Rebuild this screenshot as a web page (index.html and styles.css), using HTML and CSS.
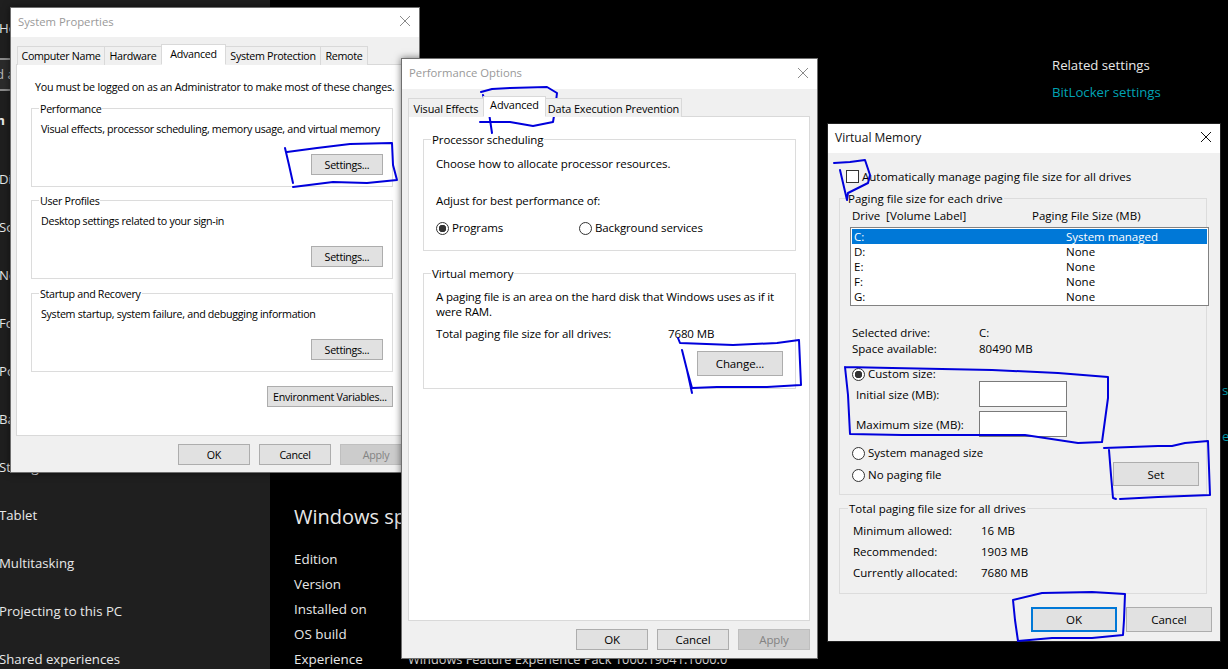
FILE: index.html
```html
<!DOCTYPE html>
<html lang="en">
<head>
<meta charset="utf-8">
<title>Virtual Memory settings</title>
<link rel="stylesheet" href="styles.css">
</head>
<body>
<div class="desktop">
  <nav class="sidebar">
    <div class="nav-home">Ho</div>
    <div class="nav-search">d a</div>
    <div class="nav-heading">m</div>
    <div class="nav-item">Di</div>
    <div class="nav-item">So</div>
    <div class="nav-item">No</div>
    <div class="nav-item">Fo</div>
    <div class="nav-item">Po</div>
    <div class="nav-item">Ba</div>
    <div class="nav-item">Storage</div>
    <div class="nav-item">Tablet</div>
    <div class="nav-item">Multitasking</div>
    <div class="nav-item">Projecting to this PC</div>
    <div class="nav-item">Shared experiences</div>
  </nav>
  <main class="settings">
    <div class="spec">
      <h2 class="spec-title">Windows specifications</h2>
      <div class="spec-row">Edition</div>
      <div class="spec-row">Version</div>
      <div class="spec-row">Installed on</div>
      <div class="spec-row">OS build</div>
      <div class="spec-row spec-exp"><span class="spec-key">Experience</span><span class="spec-value">Windows Feature Experience Pack 1000.19041.1000.0</span></div>
    </div>
    <aside class="related">
      <div class="related-title">Related settings</div>
      <div class="related-link">BitLocker settings</div>
      <div class="edge-link edge-a">s</div>
      <div class="edge-link edge-b">e</div>
    </aside>
  </main>

  <section class="window win-sys">
    <header class="titlebar inactive"><span>System Properties</span>
      <svg class="close" viewBox="0 0 12 12"><path d="M1 1L11 11M11 1L1 11"/></svg></header>
    <div class="tabs tabs-sys">
      <div class="tab t-name">Computer Name</div>
      <div class="tab t-hw">Hardware</div>
      <div class="tab active t-adv">Advanced</div>
      <div class="tab t-prot">System Protection</div>
      <div class="tab t-rem">Remote</div>
    </div>
    <div class="panel panel-sys">
      <p class="admin-note">You must be logged on as an Administrator to make most of these changes.</p>
      <div class="group sys-group">
        <div class="legend">Performance</div>
        <p class="group-desc">Visual effects, processor scheduling, memory usage, and virtual memory</p>
        <button class="btn btn-settings">Settings...</button>
      </div>
      <div class="group sys-group">
        <div class="legend">User Profiles</div>
        <p class="group-desc">Desktop settings related to your sign-in</p>
        <button class="btn btn-settings">Settings...</button>
      </div>
      <div class="group sys-group">
        <div class="legend">Startup and Recovery</div>
        <p class="group-desc">System startup, system failure, and debugging information</p>
        <button class="btn btn-settings">Settings...</button>
      </div>
      <button class="btn btn-env">Environment Variables...</button>
    </div>
    <footer class="footer footer-sys">
      <button class="btn">OK</button><button class="btn">Cancel</button><button class="btn disabled">Apply</button>
    </footer>
  </section>

  <section class="window win-perf">
    <header class="titlebar inactive tall"><span>Performance Options</span>
      <svg class="close" viewBox="0 0 12 12"><path d="M1 1L11 11M11 1L1 11"/></svg></header>
    <div class="tabs tabs-perf">
      <div class="tab t-vis">Visual Effects</div>
      <div class="tab active t-adv2">Advanced</div>
      <div class="tab t-dep">Data Execution Prevention</div>
    </div>
    <div class="panel panel-perf">
      <div class="group proc-group">
        <div class="legend">Processor scheduling</div>
        <p class="proc-line">Choose how to allocate processor resources.</p>
        <p class="proc-line adjust">Adjust for best performance of:</p>
        <div class="radio-row">
          <label class="radio-label prog"><span class="radio on"></span>Programs</label>
          <label class="radio-label"><span class="radio"></span>Background services</label>
        </div>
      </div>
      <div class="group vm-group">
        <div class="legend">Virtual memory</div>
        <p class="vm-text">A paging file is an area on the hard disk that Windows uses as if it were RAM.</p>
        <div class="vm-total"><span class="vm-total-label">Total paging file size for all drives:</span><span>7680 MB</span></div>
        <button class="btn btn-change">Change...</button>
      </div>
    </div>
    <footer class="footer footer-perf">
      <button class="btn">OK</button><button class="btn">Cancel</button><button class="btn disabled">Apply</button>
    </footer>
  </section>

  <section class="window win-vm">
    <header class="titlebar"><span>Virtual Memory</span>
      <svg class="close dark" viewBox="0 0 12 12"><path d="M1 1L11 11M11 1L1 11"/></svg></header>
    <div class="vm-body">
      <label class="auto-row"><span class="checkbox"></span>Automatically manage paging file size for all drives</label>
      <div class="group page-group">
        <div class="legend">Paging file size for each drive</div>
        <div class="list-head"><span class="col-drive">Drive&nbsp; [Volume Label]</span><span>Paging File Size (MB)</span></div>
        <div class="listbox">
          <div class="list-row selected"><span class="col-letter">C:</span><span>System managed</span></div>
          <div class="list-row"><span class="col-letter">D:</span><span>None</span></div>
          <div class="list-row"><span class="col-letter">E:</span><span>None</span></div>
          <div class="list-row"><span class="col-letter">F:</span><span>None</span></div>
          <div class="list-row"><span class="col-letter">G:</span><span>None</span></div>
        </div>
        <dl class="drive-info">
          <dt>Selected drive:</dt><dd>C:</dd>
          <dt>Space available:</dt><dd>80490 MB</dd>
        </dl>
        <label class="radio-label custom"><span class="radio on"></span>Custom size:</label>
        <div class="size-row first"><span class="size-label">Initial size (MB):</span><span class="text-input"></span></div>
        <div class="size-row"><span class="size-label">Maximum size (MB):</span><span class="text-input"></span></div>
        <div class="managed">
          <div class="managed-radios">
            <label class="radio-label"><span class="radio"></span>System managed size</label>
            <label class="radio-label"><span class="radio"></span>No paging file</label>
          </div>
          <button class="btn btn-set">Set</button>
        </div>
      </div>
      <div class="group total-group">
        <div class="legend">Total paging file size for all drives</div>
        <dl class="totals">
          <dt>Minimum allowed:</dt><dd>16 MB</dd>
          <dt>Recommended:</dt><dd>1903 MB</dd>
          <dt>Currently allocated:</dt><dd>7680 MB</dd>
        </dl>
      </div>
      <footer class="footer footer-vm">
        <button class="btn btn-wide btn-default">OK</button><button class="btn btn-wide">Cancel</button>
      </footer>
    </div>
  </section>

  <svg class="ink" viewBox="0 0 1228 669" aria-hidden="true">
    <path d="M285 148L289 165L293 183M287 152L317 148L350 144L392 143L393 165L397 180L367 183L333 182L293 187"/>
    <path d="M481 92L492 89L510 88L547 87L557 93L555 110L553 122L533 126L510 122L480 122M483 95L489 113L492 133"/>
    <path d="M678 338L680 343L733 345L777 343L799 340L801 385L767 387L717 387L692 388L687 370L682 350M687 370L692 393"/>
    <path d="M834 163L850 162L865 160L870 175L868 183L848 193L847 200L840 170"/>
    <path d="M845 367L892 368L992 370L1058 373L1108 377L1108 398L1102 442L1078 443L1025 435L958 435L902 435L850 434L848 395L845 367"/>
    <path d="M1104 448L1158 446L1172 446L1185 443L1208 441L1210 495L1158 497L1120 499M1109 450L1111 475L1113 498L1116 499"/>
    <path d="M1013 600L1042 593L1092 592L1125 594L1124 620L1123 635L1092 638L1052 638L1018 641L1015 620L1013 600"/>
  </svg>
</div>
</body>
</html>
```
FILE: styles.css
```css
* { box-sizing: border-box; }
html, body { margin: 0; padding: 0; height: 100%; overflow: hidden; background: #000; }
p, h2, dl, dd { margin: 0; }

.desktop {
  position: relative;
  width: 1228px;
  height: 669px;
  overflow: hidden;
  display: flex;
  font-family: "Open Sans", "Noto Sans", sans-serif;
  font-size: 11.5px;
  color: #000;
}

/* settings app behind the dialogs */
.sidebar {
  flex: 0 0 270px;
  height: 669px;
  background: #1f1f1f;
  color: #e8e8e8;
  font-size: 13.2px;
  overflow: hidden;
  display: flex;
  flex-direction: column;
}
.nav-home, .nav-item { flex: 0 0 48px; line-height: 48px; margin-left: -1px; white-space: nowrap; }
.nav-home { margin-top: 4px; }
.nav-search {
  flex: 0 0 31px;
  margin-top: 6px;
  line-height: 29px;
  border-top: 2px solid #8a8a8a;
  border-bottom: 2px solid #8a8a8a;
  background: #2b2b2b;
  text-indent: -4px;
  color: #b8b8b8;
}
.nav-heading { flex: 0 0 21px; margin: 19px 0 24px; line-height: 21px; font-weight: 700; text-indent: -8px; }

.settings { flex: 1; display: flex; min-width: 0; color: #e8e8e8; }
.spec { flex: 0 0 782px; padding: 503px 0 0 24px; font-size: 13.4px; }
.spec-title { font-size: 20px; font-weight: 400; line-height: 28px; margin-bottom: 16px; white-space: nowrap; }
.spec-row { height: 25px; line-height: 25px; }
.spec-exp { display: flex; white-space: nowrap; }
.spec-key { width: 114px; }
.spec-value { font-size: 12.8px; }

.related { flex: 1; display: flex; flex-direction: column; padding-top: 55px; font-size: 13.2px; }
.related-title { line-height: 20px; margin-bottom: 7px; }
.related-link { line-height: 20px; color: #00a3b4; }
.edge-link { line-height: 20px; color: #00a3b4; margin-left: 170px; }
.edge-a { margin-top: 278px; }
.edge-b { margin-top: 26px; }

/* dialogs */
.window {
  position: absolute;
  background: #f0f0f0;
  border: 1px solid #6f6f6f;
  box-shadow: 0 0 7px rgba(0, 0, 0, .55);
  display: flex;
  flex-direction: column;
}
.win-sys { left: 10px; top: 7px; width: 410px; height: 466px; font-size: 10.7px; letter-spacing: -.3px; }
.win-perf { left: 401px; top: 58px; width: 417px; height: 601px; letter-spacing: -.12px; }
.win-vm { left: 827px; top: 123px; width: 394px; height: 519px; border-color: #222; }

.titlebar {
  flex: 0 0 29px;
  background: #fff;
  display: flex;
  align-items: center;
  justify-content: space-between;
  padding: 0 8px 3px 7px;
  font-size: 12px;
  color: #111;
  letter-spacing: 0;
}
.titlebar.inactive { color: #999; font-size: 11.3px; }
.titlebar.tall { flex-basis: 30px; }
.close { width: 12px; height: 12px; fill: none; stroke: #8a8a8a; stroke-width: 1; }
.close.dark { stroke: #111; }

.tabs { display: flex; align-items: flex-end; height: 28px; margin-bottom: -1px; position: relative; z-index: 1; }
.tabs-sys { padding-left: 7px; }
.tabs-perf { padding-left: 7px; font-size: 10.9px; }
.tab {
  height: 19px;
  line-height: 19px;
  text-align: center;
  white-space: nowrap;
  background: #f0f0f0;
  border: 1px solid #d9d9d9;
  border-bottom: 0;
  margin-left: -1px;
}
.tab.active {
  height: 21px;
  line-height: 18px;
  background: #fff;
  border-bottom: 1px solid #fff;
  position: relative;
  z-index: 1;
}
.tabs-perf .tab.active { line-height: 16px; }
.t-name { width: 88px; }
.t-hw { width: 58px; }
.t-adv { width: 65px; }
.t-prot { width: 96px; }
.t-rem { width: 48px; }
.t-vis { width: 76px; }
.t-adv2 { width: 63px; }
.t-dep { width: 137px; }

.panel { background: #fff; border: 1px solid #d9d9d9; display: flex; flex-direction: column; }
.panel-sys { width: 397px; height: 372px; margin-left: 5px; padding: 14px 19px 0 14px; }
.panel-perf { width: 402px; height: 505px; margin-left: 6px; padding: 22px 13px 0 14px; }
.admin-note { line-height: 16px; white-space: nowrap; margin: 0 0 13px 4px; letter-spacing: -.23px; }

.group { border: 1px solid #dcdcdc; display: flex; flex-direction: column; }
.legend {
  width: fit-content;
  margin: -8px 0 0 8px;
  padding: 0 1px;
  background: #fff;
  line-height: 16px;
  white-space: nowrap;
}
.sys-group { height: 79px; margin-bottom: 13px; padding: 0 9px 11px 9px; }
.sys-group + .sys-group + .sys-group { margin-top: 1px; }
.sys-group .legend { margin-left: -2px; }
.group-desc { line-height: 16px; margin-top: 4px; white-space: nowrap; }
.sys-group .btn-settings { margin-top: auto; align-self: flex-end; }
.sys-group + .btn-env { margin-top: 1px; }

.btn {
  display: block;
  width: 72px;
  height: 21px;
  padding: 0;
  background: #e1e1e1;
  border: 1px solid #adadad;
  border-radius: 0;
  font: inherit;
  letter-spacing: inherit;
  color: #000;
  text-align: center;
}
.btn.disabled { background: #cccccc; border-color: #bfbfbf; color: #838383; }
.btn-env { width: 126px; align-self: flex-end; white-space: nowrap; }
.btn-change { width: 86px; height: 25px; align-self: flex-end; margin: 9px 0 0; }
.btn-set { width: 86px; height: 24px; margin: 17px 0 0; }
.btn-wide { width: 86px; height: 25px; }
.btn-default { border: 2px solid #0078d7; }

.footer { display: flex; justify-content: flex-end; gap: 9px; }
.footer-sys { margin-top: 8px; padding-right: 7px; }
.footer-perf { margin-top: 8px; padding-right: 7px; }

/* performance options */
.panel-perf .group { padding: 0 12px; }
.panel-perf .legend { margin-left: -5px; }
.proc-group { height: 112px; margin-bottom: 22px; }
.proc-line { line-height: 16px; margin-top: 8px; }
.proc-line.adjust { margin-top: 21px; }
.radio-row { display: flex; margin-top: 11px; }
.radio-label { display: flex; align-items: center; gap: 3px; line-height: 16px; white-space: nowrap; }
.prog { width: 143px; }
.radio {
  flex: 0 0 13px;
  width: 13px;
  height: 13px;
  border: 1px solid #333;
  border-radius: 50%;
  background: #fff;
}
.radio.on { background: radial-gradient(circle, #333 0 3.5px, #fff 4px); }
.vm-group { height: 116px; }
.vm-text { line-height: 15px; margin-top: 7px; letter-spacing: -.16px; }
.vm-total { display: flex; line-height: 16px; margin-top: 7px; }
.vm-total-label { width: 232px; white-space: nowrap; }

/* virtual memory */
.vm-body { padding: 0 13px 0 11px; background: #f0f0f0; flex: 1; display: flex; flex-direction: column; }
.auto-row { display: flex; align-items: center; gap: 3px; height: 16px; margin: 15px 0 0 7px; white-space: nowrap; }
.checkbox { width: 13px; height: 13px; background: #fff; border: 1px solid #333; }
.vm-body .legend { background: #f0f0f0; }
.page-group { height: 297px; margin-top: 14px; padding: 0 0 0 10px; }
.page-group .legend { margin-left: -3px; }
.list-head { display: flex; line-height: 16px; margin: 1px 0 0 2px; white-space: nowrap; }
.col-drive { width: 180px; }
.listbox { width: 359px; height: 79px; margin-top: 3px; background: #fff; border: 1px solid #828282; padding: 1px; }
.list-row { display: flex; height: 15px; line-height: 15px; padding-left: 2px; }
.list-row.selected { background: #0078d7; color: #fff; }
.col-letter { width: 212px; }
.drive-info { display: grid; grid-template-columns: 127px 1fr; margin: 19px 0 0 2px; line-height: 16px; }
.custom { margin: 9px 0 0 2px; }
.size-row { display: flex; align-items: center; height: 26px; margin-left: 6px; }
.size-row.first { margin-top: -1px; }
.size-row + .size-row { margin-top: 4px; }
.size-label { width: 123px; white-space: nowrap; }
.text-input { width: 88px; height: 26px; background: #fff; border: 1px solid #7a7a7a; }
.managed { display: flex; justify-content: space-between; margin: 8px 7px 0 2px; }
.managed-radios { display: flex; flex-direction: column; gap: 6px; }
.total-group { height: 86px; margin-top: 13px; }
.totals { display: grid; grid-template-columns: 128px 1fr; row-gap: 5px; line-height: 16px; margin: 6px 0 0 13px; }
.footer-vm { margin-top: 13px; padding-right: 0; margin-right: -5px; }

/* hand-drawn annotations */
.ink {
  position: absolute;
  left: 0;
  top: 0;
  width: 1228px;
  height: 669px;
  fill: none;
  stroke: #0000dc;
  stroke-width: 2;
  stroke-linejoin: round;
  stroke-linecap: round;
  pointer-events: none;
}
```
